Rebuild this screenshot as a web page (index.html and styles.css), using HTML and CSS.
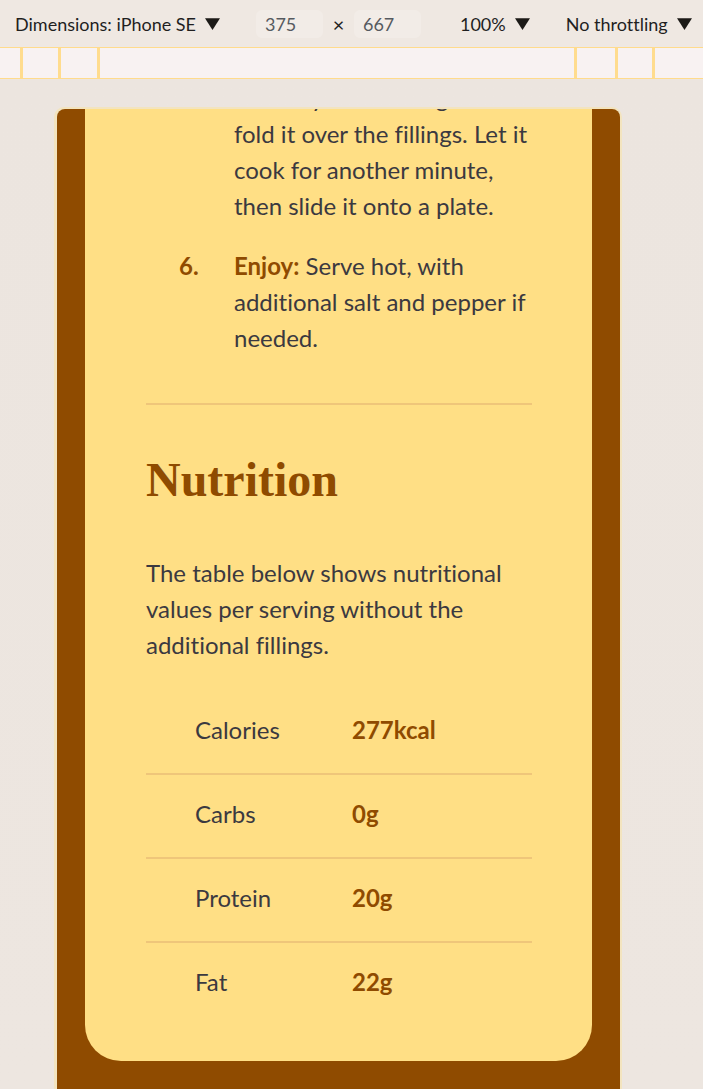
FILE: index.html
```html
<!DOCTYPE html>
<html lang="en">
<head>
<meta charset="utf-8">
<title>Recipe – Nutrition</title>
<link rel="stylesheet" href="styles.css">
</head>
<body>
<header class="toolbar">
  <span class="tb-item">Dimensions: iPhone SE <svg class="caret" viewBox="0 0 14 12" width="15" height="13"><polygon points="0,1 14,1 7,12"/></svg></span>
  <span class="dim-box first">375</span>
  <span class="times">×</span>
  <span class="dim-box">667</span>
  <span class="tb-item zoom">100% <svg class="caret" viewBox="0 0 14 12" width="15" height="13"><polygon points="0,1 14,1 7,12"/></svg></span>
  <span class="tb-item throttle">No throttling <svg class="caret" viewBox="0 0 14 12" width="15" height="13"><polygon points="0,1 14,1 7,12"/></svg></span>
</header>
<div class="ruler">
  <span class="seg s1"></span><span class="seg s2"></span><span class="seg s3"></span><span class="seg s4"></span><span class="seg s5"></span><span class="seg s6"></span><span class="seg s7"></span>
</div>
<main class="stage">
  <div class="viewport">
    <div class="page">
      <article class="card">
        <ol class="steps">
          <li class="step"><span class="num">5.</span><p class="step-text"><strong>Fold and serve:</strong> As the omelet continues to cook, carefully lift one edge and fold it over the fillings. Let it cook for another minute, then slide it onto a plate.</p></li>
          <li class="step"><span class="num">6.</span><p class="step-text"><strong>Enjoy:</strong> Serve hot, with additional salt and pepper if needed.</p></li>
        </ol>
        <hr class="divider">
        <h2 class="title">Nutrition</h2>
        <p class="intro">The table below shows nutritional values per serving without the additional fillings.</p>
        <div class="nutrition">
          <div class="row"><span class="label">Calories</span><span class="value">277kcal</span></div>
          <div class="row"><span class="label">Carbs</span><span class="value">0g</span></div>
          <div class="row"><span class="label">Protein</span><span class="value">20g</span></div>
          <div class="row"><span class="label">Fat</span><span class="value">22g</span></div>
        </div>
      </article>
    </div>
  </div>
</main>
</body>
</html>
```

FILE: styles.css
```css
* { box-sizing: border-box; }
html, body { margin: 0; padding: 0; }
body {
  width: 703px;
  height: 1089px;
  overflow: hidden;
  background: #ede6e0;
  font-family: Lato, "Open Sans", sans-serif;
  font-variant-ligatures: none;
}

/* DevTools toolbar */
.toolbar {
  height: 47px;
  background: #efe8e2;
  display: flex;
  align-items: center;
  padding-left: 15px;
  font-size: 18px;
  color: #1f1f1f;
}
.tb-item { display: flex; align-items: center; gap: 9px; white-space: nowrap; }
.caret { fill: #1c1a17; }
.dim-box {
  width: 67px;
  height: 28px;
  border-radius: 6px;
  background: #f2ece7;
  color: #565a60;
  display: flex;
  align-items: center;
  padding-left: 9px;
  font-size: 18px;
}
.dim-box.first { margin-left: 36px; }
.times { width: 31px; text-align: center; color: #222; font-size: 20px; }
.zoom { margin-left: 39px; }
.throttle { margin-left: 36px; }

/* ruler */
.ruler {
  height: 32px;
  background: #f8f2f2;
  border-top: 1px solid #ffdb8c;
  border-bottom: 1px solid #ffdb8c;
  display: grid;
  grid-template-columns: 20px 38px 39px 477px 41px 37px 1fr;
}
.seg { border-left: 3px solid #ffdc8e; }
.seg.s1 { border-left: 0; }

/* device stage */
.stage {
  padding-top: 28px;
  padding-left: 54px;
  height: 1010px;
  background: linear-gradient(#ece5df, #ede6e0);
}
.viewport {
  width: 568px;
  height: 982px;
  padding: 2px 2px 0 3px;
  background: #f3e4bf;
  border-radius: 10px 10px 0 0;
}
.page {
  height: 980px;
  overflow: hidden;
  background: #8f4b00;
  border-radius: 8px 8px 0 0;
  padding: 0 28px;
}
.card {
  margin-top: -101px;
  background: #ffdf85;
  border-radius: 0 0 36px 36px;
  padding: 0 60px 36px 61px;
  color: #3b3940;
  font-size: 24px;
  line-height: 36px;
}

/* steps list */
.steps { list-style: none; margin: 0; padding: 0; display: flex; flex-direction: column; gap: 24px; }
.step { display: grid; grid-template-columns: 88px 1fr; }
.num { padding-left: 33px; font-weight: 700; color: #8f4b00; }
.step-text { margin: 0; }
.step-text strong { color: #8f4b00; font-weight: 700; }

.divider {
  margin: 47px 0 0;
  border: 0;
  height: 2px;
  background: #efc67a;
}
.title {
  margin: 47px 0 0;
  font-family: "Liberation Serif", "Times New Roman", serif;
  font-size: 48px;
  line-height: 55px;
  font-weight: 700;
  color: #8f4b00;
}
.intro { margin: 48px 0 0; }

/* nutrition table */
.nutrition { margin-top: 28px; }
.row {
  display: grid;
  grid-template-columns: 206px 1fr;
  padding: 21px 0 25px;
  border-bottom: 2px solid #efc67a;
}
.row:last-child { border-bottom: 0; }
.label { padding-left: 49px; }
.value { font-weight: 700; color: #8f4b00; }
```
